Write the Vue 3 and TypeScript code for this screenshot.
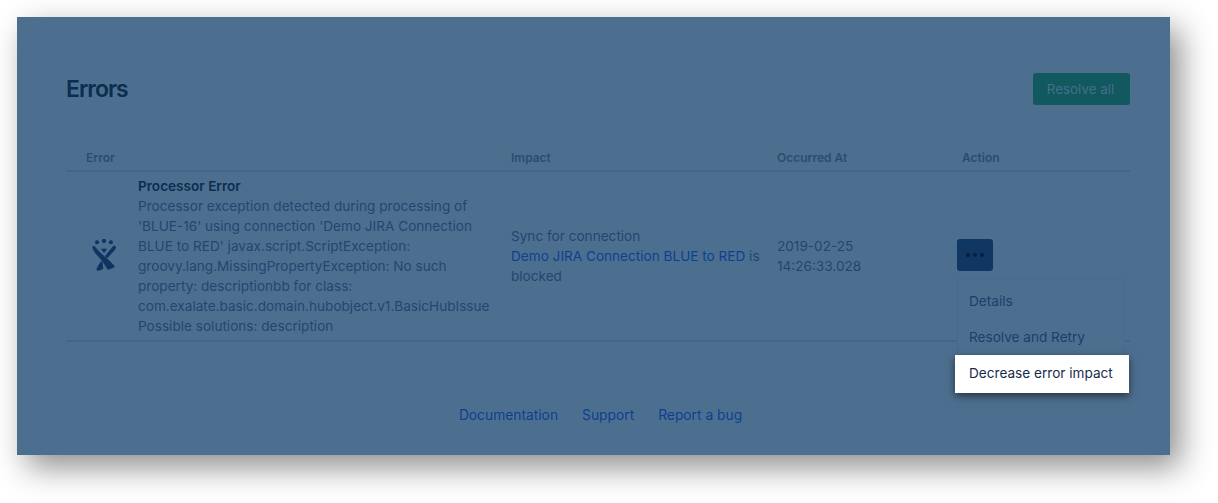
<template>
  <div class="page">
    <div class="panel">
      <div class="head">
        <h1 class="title">Errors</h1>
        <button class="resolve-btn">Resolve all</button>
      </div>

      <div class="table">
        <div class="row row-head">
          <div class="cell-error">Error</div>
          <div>Impact</div>
          <div>Occurred At</div>
          <div>Action</div>
        </div>

        <div class="row row-body">
          <div class="cell-error error-body">
            <div class="icon-wrap">
              <svg viewBox="0 0 24 32" width="24" height="32">
                <circle cx="5" cy="3.2" r="2" fill="currentColor" />
                <circle cx="12" cy="1.900" r="2.100" fill="currentColor" />
                <circle cx="18.900" cy="3.200" r="2" fill="currentColor" />
                <path fill="currentColor" d="M8.800 9.800h6.400l-3.200 4.200z" />
                <path fill="currentColor" d="M24 8.200c-.4-1.500-2-1.900-3-1-2.800 3.600-5.800 7-8.600 10.800L7.600 24.200 4.600 29.500c-.5 1.200.4 2.300 1.700 2.200 1.600-.2 3.400-.8 5-1.900l-.6-4.800c3.800-5 7.800-9.600 11.700-13.600 1-1 1.800-2.200 1.600-3.200z" />
                <path fill="currentColor" stroke="#4d6f8f" stroke-width="0.7" d="M0 8.200c.3-1.500 2-2 3-1 2.400 3.100 5.400 6.300 9 9.300 4 3.400 7.500 6.700 10.400 10 .8 1 .5 1.900-.6 2.400l-4.800 2c-1 .3-1.700 0-2.200-.8-3-5.500-6.300-9.800-10-13.800C2.600 13.900.6 11.300 0 8.200z" />
              </svg>
            </div>
            <div class="error-text">
              <div class="error-title">Processor Error</div>
              <div>Processor exception detected during processing of 'BLUE-16' using connection 'Demo JIRA Connection BLUE to RED' javax.script.ScriptException: groovy.lang.MissingPropertyException: No such property: descriptionbb for class: com.exalate.basic.domain.hubobject.v1.BasicHubIssue Possible solutions: description</div>
            </div>
          </div>
          <div class="impact">
            Sync for connection<br />
            <a class="link">Demo JIRA Connection BLUE to RED</a> is<br />
            blocked
          </div>
          <div class="occurred">2019-02-25 14:26:33.028</div>
          <div class="action">
            <button class="more-btn"><span></span><span></span><span></span></button>
            <div class="menu">
              <div v-for="item in menuItems" :key="item" class="menu-item" :class="{ active: item === activeItem }">
                {{ item }}
              </div>
            </div>
          </div>
        </div>
      </div>

      <div class="footer">
        <a class="link">Documentation</a>
        <a class="link">Support</a>
        <a class="link">Report a bug</a>
      </div>
    </div>
  </div>
</template>

<script setup lang="ts">
const menuItems: string[] = ['Details', 'Resolve and Retry', 'Decrease error impact'];
const activeItem = 'Decrease error impact';
</script>

<style>
html, body {
  background: #fff;
}
</style>

<style scoped>
.page {
  width: 1218px;
  height: 503px;
  padding: 17px 48px 48px 17px;
  box-sizing: border-box;
  overflow: hidden;
  font-family: Inter, "Liberation Sans", sans-serif;
  font-size: 13.6px;
  line-height: 20px;
  color: #234670;
}

.panel {
  height: 438px;
  background: #4d6f8f;
  box-shadow: 10px 12px 30px rgba(0, 0, 0, 0.45);
  padding: 56px 40px 0 49px;
  box-sizing: border-box;
}

.head {
  display: flex;
  justify-content: space-between;
  align-items: center;
  height: 32px;
}

.title {
  margin: 0;
  font-size: 23px;
  font-weight: 600;
  line-height: 30px;
  letter-spacing: -1px;
  color: #0b2e50;
}

.resolve-btn {
  width: 97px;
  height: 32px;
  border: none;
  border-radius: 3px;
  background: #12585f;
  color: #41708a;
  font: inherit;
  font-size: 13.4px;
  padding: 0 2px 0 0;
}

.table {
  margin-top: 38px;
}

.row {
  display: grid;
  grid-template-columns: 445px 266px 185px 1fr;
}

.row-head {
  height: 29px;
  padding-top: 5px;
  box-sizing: border-box;
  font-size: 12px;
  line-height: 20px;
  font-weight: 600;
  color: #2c4c6e;
  border-bottom: 2px solid #44668a;
}

.row-head .cell-error {
  padding-left: 20px;
}

.row-body {
  height: 168px;
  align-items: center;
  border-bottom: 2px solid #44668a;
}

.error-body {
  display: flex;
  align-items: center;
}

.icon-wrap {
  width: 72px;
  flex: none;
  display: flex;
  justify-content: center;
  padding-left: 4px;
  box-sizing: border-box;
  color: #0d3560;
}

.icon-wrap svg {
  display: block;
  margin-top: -3px;
}

.error-text {
  width: 360px;
  flex: none;
}

.error-title {
  font-weight: 600;
  color: #0b2e50;
}

.impact {
  width: 250px;
}

.link {
  color: #0d3f8f;
  text-decoration: none;
}

.occurred {
  width: 110px;
}

.action {
  position: relative;
  align-self: stretch;
}

.more-btn {
  position: absolute;
  top: 67px;
  left: -5px;
  width: 36px;
  height: 32px;
  border: none;
  border-radius: 3px;
  background: #0f3761;
  display: flex;
  align-items: center;
  justify-content: center;
  gap: 3px;
  padding: 0;
}

.more-btn span {
  flex: none;
  width: 4px;
  height: 4px;
  border-radius: 50%;
  background: #06203c;
}

.menu {
  position: absolute;
  top: 106px;
  left: -5px;
  width: 168px;
  box-sizing: border-box;
  border: 1px solid #486a8b;
  border-radius: 3px;
  background: #4d6f8f;
  padding: 4px 0 0;
  z-index: 2;
}

.menu-item {
  height: 36px;
  line-height: 36px;
  padding-left: 11px;
  color: #1a3f69;
}

.menu-item.active {
  position: relative;
  margin: 0 -5px -2px -3px;
  padding-left: 14px;
  height: 38px;
  background: #fff;
  color: #172b4d;
  box-shadow: 0 3px 8px rgba(0, 0, 0, 0.55);
}

.footer {
  display: flex;
  justify-content: center;
  gap: 24px;
  margin-top: 63px;
  padding-left: 5px;
  font-size: 13.8px;
}
</style>
